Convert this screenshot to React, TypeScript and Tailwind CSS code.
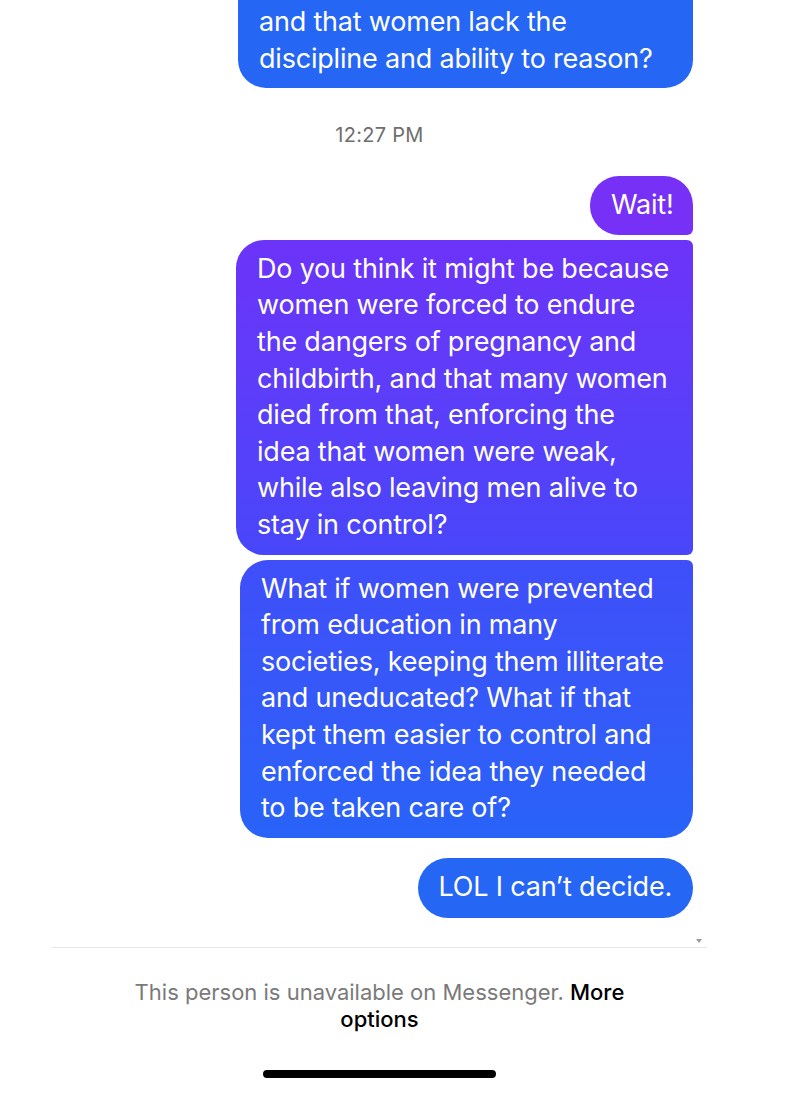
import React from 'react';

interface Bubble {
  lines: string[];
  width: string;
  className: string;
}

const font = { fontFamily: 'Inter, "Noto Sans", sans-serif' };

const group: Bubble[] = [
  {
    lines: ['Wait!'],
    width: 'w-[103px]',
    className: 'bg-[#7630f6] rounded-[29px] rounded-br-[6px] mb-[5px]',
  },
  {
    lines: [
      'Do you think it might be because',
      'women were forced to endure',
      'the dangers of pregnancy and',
      'childbirth, and that many women',
      'died from that, enforcing the',
      'idea that women were weak,',
      'while also leaving men alive to',
      'stay in control?',
    ],
    width: 'w-[457px]',
    className: 'bg-gradient-to-b from-[#6c33f8] to-[#4846fa] rounded-[28px] rounded-tr-[6px] rounded-br-[6px] mb-[5px]',
  },
  {
    lines: [
      'What if women were prevented',
      'from education in many',
      'societies, keeping them illiterate',
      'and uneducated? What if that',
      'kept them easier to control and',
      'enforced the idea they needed',
      'to be taken care of?',
    ],
    width: 'w-[453px]',
    className: 'bg-gradient-to-b from-[#3f4ef9] to-[#2863f8] rounded-[28px] rounded-tr-[6px]',
  },
];

const App: React.FC = () => {
  return (
    <div className="w-[800px] h-[1103px] bg-white overflow-hidden" style={font}>
      <div className="w-[655px] ml-[52px] flex flex-col">
        {/* top bubble, cut off by the screen edge */}
        <div className="flex justify-end pr-[14px]">
          <div className="w-[455px] bg-[#2566f4] rounded-b-[28px] pl-[21px] pt-[4px] pb-[11px] text-white text-[27px] leading-[36.6px] tracking-[-0.2px]">
            <div>and that women lack the</div>
            <div>discipline and ability to reason?</div>
          </div>
        </div>

        <div className="text-center text-[20px] text-[#6e6e6e] mt-[34px] h-[26px] leading-[26px] tracking-[0.3px]">12:27 PM</div>

        <div className="flex flex-col items-end pr-[14px] mt-[28px]">
          {group.map((b, i) => (
            <div
              key={i}
              className={`${b.width} ${b.className} px-[21px] py-[11px] text-white text-[27px] leading-[36.6px] tracking-[-0.2px] whitespace-nowrap`}
            >
              {b.lines.map((l, j) => (
                <div key={j}>{l}</div>
              ))}
            </div>
          ))}

          <div className="mt-[20px] h-[60px] px-[21px] flex items-center bg-[#2566f5] rounded-full text-white text-[27px] tracking-[-0.2px] whitespace-nowrap">
            LOL I can’t decide.
          </div>
        </div>

        <div className="flex justify-end pr-[5px] mt-[21px] h-[6px] items-start">
          <div className="w-0 h-0 border-l-[3px] border-r-[3px] border-t-[4px] border-l-transparent border-r-transparent border-t-[#9a9a9a]" />
        </div>
        <div className="h-px bg-[#e6e6e6] mt-[2px]" />

        <div className="mt-[31px] text-center text-[22px] leading-[27px] tracking-[0px]">
          <span className="text-[#7a7a7a]">This person is unavailable on Messenger. </span>
          <span className="text-black font-medium">More</span>
          <br />
          <span className="text-black font-medium">options</span>
        </div>

        <div className="flex justify-center mt-[37px]">
          <div className="w-[233px] h-[8px] rounded-full bg-black" />
        </div>
      </div>
    </div>
  );
};

export default App;
